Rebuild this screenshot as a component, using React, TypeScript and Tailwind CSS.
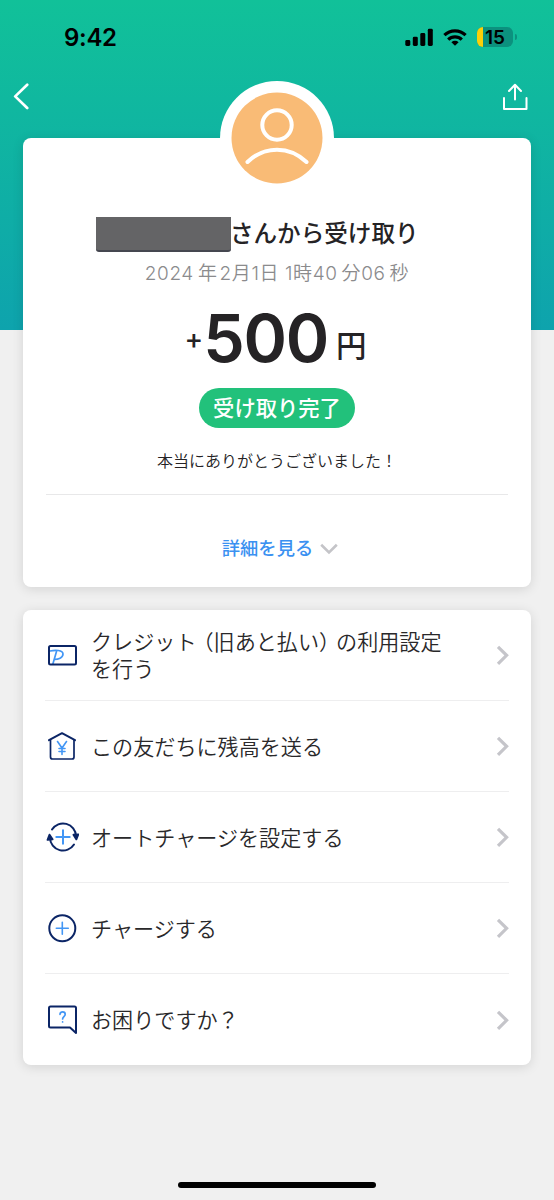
import type { ReactNode } from 'react';

interface MenuRowProps {
  icon: ReactNode;
  children: ReactNode;
}

const NAVY = '#0b2566';
const BLUE = '#4296f5';

function StatusBar() {
  return (
    <div className="flex h-[74px] items-center justify-between pl-[64px] pr-[37.5px]">
      <span className="pt-px text-[24px] font-semibold leading-none tracking-[-0.3px] text-black">9:42</span>
      <div className="flex items-center">
        <svg width="29" height="19" viewBox="0 0 29 19" fill="#000">
          <rect x="0.3" y="12" width="5" height="6" rx="1.4" />
          <rect x="7.8" y="8.7" width="5" height="9.3" rx="1.4" />
          <rect x="15.3" y="5" width="5" height="13" rx="1.4" />
          <rect x="22.8" y="0.8" width="5" height="17.2" rx="1.4" />
        </svg>
        <svg width="24" height="18" viewBox="0 0 24 18" className="ml-[9px]" fill="none" stroke="#000" strokeWidth="3.2">
          <path d="M1.4 7.2A15.3 15.3 0 0 1 22.6 7.2" />
          <path d="M5.2 11.6A9.8 9.8 0 0 1 18.8 11.6" />
          <path d="M8.4 14.2A5.2 5.2 0 0 1 15.6 14.2L12 17.8Z" fill="#000" stroke="none" />
        </svg>
        <div className="ml-[10px] flex h-[19.5px] w-[36px] items-center rounded-[6px] bg-[#0c917e]">
          <div className="h-full w-[6px] rounded-l-[6px] bg-[#fbd009]" />
          <span className="ml-[2px] text-[19px] font-semibold leading-none text-black">15</span>
        </div>
        <div className="ml-[1.5px] h-[6px] w-[2px] rounded-r-full bg-[#0c917e]" />
      </div>
    </div>
  );
}

function NavBar() {
  return (
    <div className="flex h-16 items-start justify-between pl-[12px] pr-[26px] pt-[8px]">
      <svg width="17" height="30" viewBox="0 0 17 30" fill="none" stroke="#fff" strokeWidth="2.7" strokeLinecap="round" strokeLinejoin="round">
        <path d="M15.2 2.8L3.2 14.4L15.2 26" />
      </svg>
      <svg width="26" height="30" viewBox="0 0 26 30" fill="none" stroke="#fff" strokeWidth="2" strokeLinecap="round" strokeLinejoin="round">
        <path d="M2 16V27H24.5V16" />
        <path d="M13 17.5V3M7 9L13 2.8L19 9" />
      </svg>
    </div>
  );
}

function Avatar() {
  return (
    <div className="absolute -top-[57px] left-1/2 flex size-[114px] -translate-x-1/2 items-center justify-center rounded-full bg-white">
      <svg width="92" height="92" viewBox="0 0 92 92" fill="none" stroke="#fff" strokeWidth="4" strokeLinecap="round">
        <circle cx="46" cy="46" r="45.5" fill="#f9bb76" stroke="none" />
        <circle cx="46" cy="33" r="14.7" />
        <path d="M16.5 70C33.5 53.5 58.5 53.5 75.5 70" />
      </svg>
    </div>
  );
}

function Receipt() {
  return (
    <section className="relative flex h-[449px] flex-col items-center rounded-[8px] bg-white px-[23px] text-[#252325] shadow-[0_2px_12px_rgba(0,0,0,0.12)]">
      <Avatar />
      <div className="mt-[78px] flex h-9 items-center pr-[39px]">
        <div className="h-[35px] w-[135px] rounded-b-[3px] border-b-2 border-[#454750] bg-[#646466]" />
        <h1 className="-ml-[1.5px] text-[23.6px] font-medium leading-9">さんから受け取り</h1>
      </div>
      <p className="mt-[7px] flex h-[30px] items-center whitespace-pre text-[19px] font-[350] tracking-[0.6px] text-[#8b8b8d]">
        2024<span className="ml-[4px]">年</span><span className="ml-[2px]">2月1日 1時40</span><span className="ml-[4px]">分</span>06<span className="ml-[4px]">秒</span>
      </p>
      <div className="mt-[9px] flex h-[80px] items-baseline pr-[3px]">
        <span className="relative -top-[13px] text-[28px] font-medium leading-none">+</span>
        <span className="text-[66px] font-semibold leading-[80px] tracking-[-1.3px]">500</span>
        <span className="relative -top-[5px] ml-[8px] text-[30.5px] font-medium leading-none">円</span>
      </div>
      <div className="mt-[10px] flex h-10 w-[156px] items-center justify-center rounded-full bg-[#22c17b] pt-px text-[21.3px] font-medium text-white">
        受け取り完了
      </div>
      <p className="mt-[20px] h-6 pt-px text-[16px] font-[350] leading-6">本当にありがとうございました！</p>
      <div className="mt-[22px] h-px w-full bg-[#e8e8e9]" />
      <button className="mt-[40px] flex h-7 items-center gap-[7px] pl-[6px] text-[18.3px] font-medium text-[#3b91f1]">
        詳細を見る
        <svg width="18" height="12" viewBox="0 0 18 12" fill="none" stroke="#c4c4c8" strokeWidth="2.6">
          <path d="M1.2 1.8L9 9.5L16.8 1.8" />
        </svg>
      </button>
    </section>
  );
}

function MenuRow({ icon, children }: MenuRowProps) {
  return (
    <li className="flex h-[91px] items-center border-b border-[#eeeeef] last:border-b-0">
      <svg width="34" height="34" viewBox="0 0 34 34" fill="none" stroke={NAVY} strokeWidth="2" strokeLinecap="round" strokeLinejoin="round">
        {icon}
      </svg>
      <span className="ml-[12px] grow pt-[2px] text-[21.1px] font-[350] leading-[27px]">{children}</span>
      <svg width="14" height="22" viewBox="0 0 14 22" fill="none" stroke="#c5c5ca" strokeWidth="3.2">
        <path d="M3 2.8L11.6 11.3L3 19.8" />
      </svg>
    </li>
  );
}

function Menu() {
  return (
    <ul className="mt-[23px] h-[455px] rounded-[8px] bg-white px-[22px] text-[#29282a] shadow-[0_2px_12px_rgba(0,0,0,0.12)]">
      <MenuRow
        icon={
          <>
            <path d="M5 13C10 11.8 18 11.8 18 16C18 20 13 21.5 9.5 21.5M11.5 13.5L8 25.5" stroke={BLUE} strokeWidth="1.7" />
            <rect x="4" y="8" width="27" height="18.5" rx="1.5" />
          </>
        }
      >
        クレジット<span className="ml-[6.5px] [font-feature-settings:'halt']">（</span>旧あと払い
        <span className="mr-[6.5px] [font-feature-settings:'halt']">）</span>の利用設定
        <br />
        を行う
      </MenuRow>
      <MenuRow
        icon={
          <>
            <path d="M4 11.2L17 4.2L30 11.2" />
            <path d="M5.5 11V28Q5.5 30 7.5 30H27Q29 30 29 28V11" strokeWidth="1.7" />
            <path d="M12.5 12.5L17 19L21.5 12.5M17 19V25.5M14 19.5H20M14 22.5H20" stroke={BLUE} strokeWidth="1.6" />
          </>
        }
      >
        この友だちに残高を送る
      </MenuRow>
      <MenuRow
        icon={
          <>
            <path d="M7 9.5A13 13 0 0 1 31 16" />
            <path d="M29 24.5A13 13 0 0 1 5 18" />
            <path d="M28.5 14.8L31.3 19.3L33.2 14.5ZM2.6 19.8L4.5 14.8L7.5 19.3Z" fill={NAVY} />
            <path d="M18 10.3V23.7M11.3 17H24.7" stroke={BLUE} />
          </>
        }
      >
        オートチャージを設定する
      </MenuRow>
      <MenuRow
        icon={
          <>
            <circle cx="17.3" cy="17.3" r="13" />
            <path d="M17.3 11.3V23.3M11.3 17.3H23.3" stroke={BLUE} strokeWidth="1.6" />
          </>
        }
      >
        チャージする
      </MenuRow>
      <MenuRow
        icon={
          <>
            <path d="M5.5 3.5H29.5Q31 3.5 31 5V30L25 24.5H5.5Q4 24.5 4 23V5Q4 3.5 5.5 3.5Z" />
            <path d="M15 11.3C15 8 20.2 8 20.2 11.3C20.2 13.6 17.6 13.6 17.6 16M17.6 18.9V19" stroke={BLUE} strokeWidth="1.7" />
          </>
        }
      >
        お困りですか？
      </MenuRow>
    </ul>
  );
}

export default function App() {
  return (
    <div
      lang="ja"
      className="flex h-[1200px] w-[554px] flex-col overflow-hidden bg-[linear-gradient(180deg,#11c199_0px,#0ea3ad_330px,#f0f0f0_330px)] font-['Inter','Noto_Sans_CJK_JP',sans-serif]"
    >
      <StatusBar />
      <NavBar />
      <main className="px-[23px]">
        <Receipt />
        <Menu />
      </main>
      <div className="mx-auto mb-[12px] mt-auto h-[6px] w-[198px] rounded-full bg-black" />
    </div>
  );
}
